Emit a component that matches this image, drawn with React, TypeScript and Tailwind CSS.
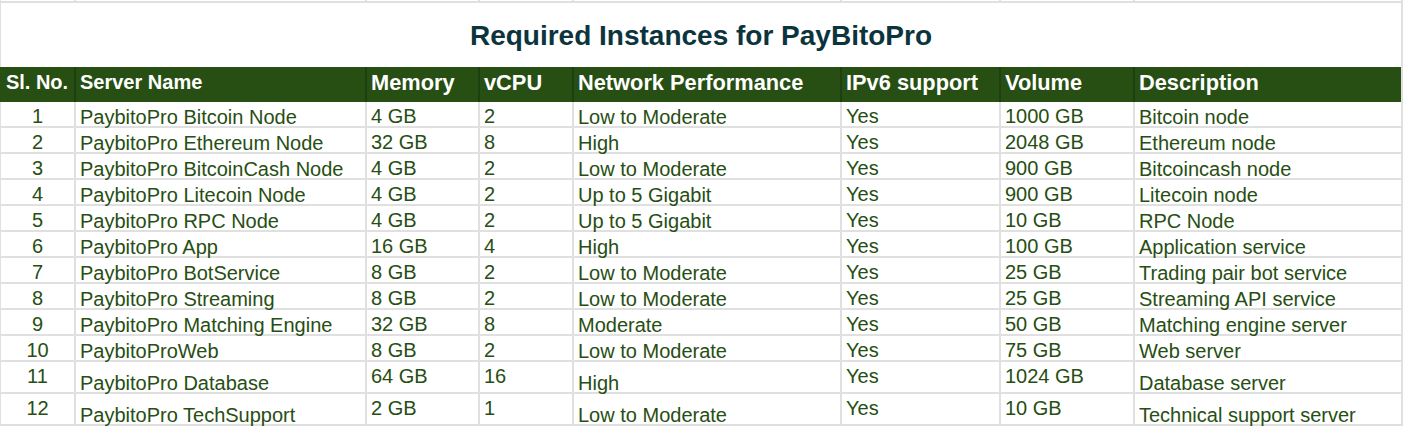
import React from "react";

type Row = [string, string, string, string, string, string, string, string];

const rows: Row[] = [
  ["1", "PaybitoPro Bitcoin Node", "4 GB", "2", "Low to Moderate", "Yes", "1000 GB", "Bitcoin node"],
  ["2", "PaybitoPro Ethereum Node", "32 GB", "8", "High", "Yes", "2048 GB", "Ethereum node"],
  ["3", "PaybitoPro BitcoinCash Node", "4 GB", "2", "Low to Moderate", "Yes", "900 GB", "Bitcoincash node"],
  ["4", "PaybitoPro Litecoin Node", "4 GB", "2", "Up to 5 Gigabit", "Yes", "900 GB", "Litecoin node"],
  ["5", "PaybitoPro RPC Node", "4 GB", "2", "Up to 5 Gigabit", "Yes", "10 GB", "RPC Node"],
  ["6", "PaybitoPro App", "16 GB", "4", "High", "Yes", "100 GB", "Application service"],
  ["7", "PaybitoPro BotService", "8 GB", "2", "Low to Moderate", "Yes", "25 GB", "Trading pair bot service"],
  ["8", "PaybitoPro Streaming", "8 GB", "2", "Low to Moderate", "Yes", "25 GB", "Streaming API service"],
  ["9", "PaybitoPro Matching Engine", "32 GB", "8", "Moderate", "Yes", "50 GB", "Matching engine server"],
  ["10", "PaybitoProWeb", "8 GB", "2", "Low to Moderate", "Yes", "75 GB", "Web server"],
  ["11", "PaybitoPro Database", "64 GB", "16", "High", "Yes", "1024 GB", "Database server"],
  ["12", "PaybitoPro TechSupport", "2 GB", "1", "Low to Moderate", "Yes", "10 GB", "Technical support server"],
];

const headers = ["Sl. No.", "Server Name", "Memory", "vCPU", "Network Performance", "IPv6 support", "Volume", "Description"];

// columns whose text sits at the bottom of the cell
const bottomCols = [1, 4, 7];

const App = () => {
  return (
    <div className="w-[1403px] h-[426px] overflow-hidden bg-white font-['Liberation_Sans',Arial,sans-serif]">
      <div className="grid grid-cols-[76px_291px_113px_94px_268px_159px_134px_268px]">
        {headers.map((_, i) => (
          <div
            key={"top" + i}
            className={`h-[3px] border-b-2 border-r-2 border-[#e0e0e0] ${i === 0 ? "border-l" : ""}`}
          />
        ))}

        <div className="col-span-8 h-[64px] pt-[2px] border-l border-r-2 border-[#e0e0e0] flex items-center justify-center">
          <h1 className="text-[28px] leading-[32px] font-bold text-[#0c343d]">Required Instances for PayBitoPro</h1>
        </div>

        {headers.map((h, i) => (
          <div
            key={h}
            className={`h-[35px] bg-[#274e13] px-[4px] text-white leading-[23px] font-bold whitespace-nowrap ${
              i < 2 ? "pt-[4px] text-[20px]" : "pt-[4px] text-[21.8px]"
            } ${i === 0 ? "text-center" : ""} ${
              i === 7 ? "border-r-2 border-[#e0e0e0]" : "border-r-2 border-[#1e4010]"
            }`}
          >
            {h}
          </div>
        ))}

        {rows.map((r, ri) =>
          r.map((v, ci) => (
            <div
              key={ri + "-" + ci}
              className={`${ri >= 10 ? "h-[32px]" : "h-[26px]"} border-b-2 border-r-2 border-[#e0e0e0] px-[4px] flex ${
                bottomCols.includes(ci) ? "items-end" : "items-start pt-[5px]"
              } ${ci === 0 ? "border-l justify-center" : ""} text-[20px] leading-[18px] text-[#274e13] whitespace-nowrap`}
            >
              {v}
            </div>
          ))
        )}
      </div>
    </div>
  );
};

export default App;
